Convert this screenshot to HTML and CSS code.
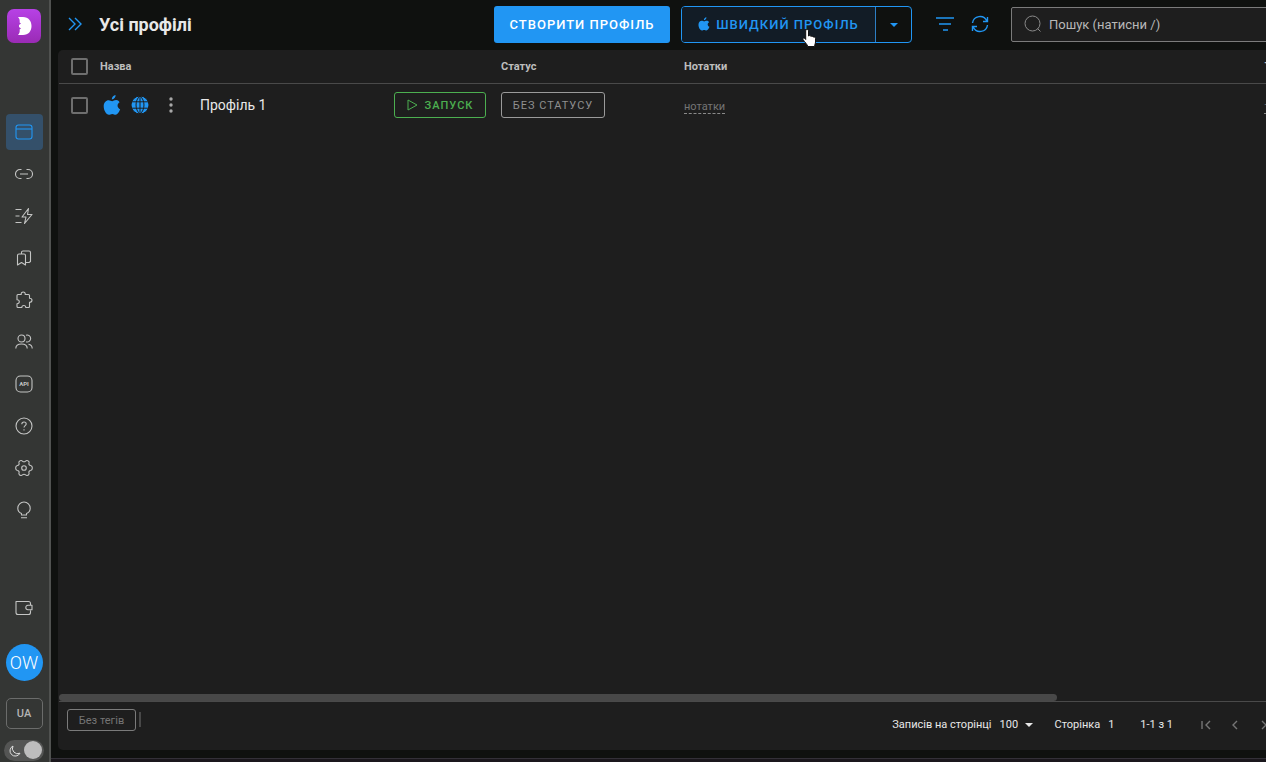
FILE: index.html
```html
<!DOCTYPE html>
<html lang="uk">
<head>
  <meta charset="UTF-8">
  <meta name="viewport" content="width=device-width, initial-scale=1.0">
  <title>Усі профілі</title>
  <link rel="stylesheet" href="styles.css">
</head>
<body>

<svg class="sprite" aria-hidden="true">
  <symbol id="apple" viewBox="0 0 18 20">
    <path d="M12.600 0c.1 2.400-1.600 4.400-3.800 4.500C8.600 2.300 10.500.3 12.600 0zM16.600 7.200c-3 1.700-2.500 5.700.6 7-.8 2.200-2.600 5.500-4.600 5.500-1.300 0-1.700-.8-3.300-.8s-2.200.8-3.400.8C3.300 19.700.7 15.600.7 11.300.7 7.500 3.100 5.200 5.600 5.200c1.500 0 2.700 1 3.600 1s2.200-1.100 4-1.100c1.300 0 2.500.7 3.400 2.100z"/>
  </symbol>
</svg>

<div class="app">

  <aside class="sidebar">
    <a href="#" class="logo" aria-label="Головна">
      <svg width="34" height="34" viewBox="0 0 34 34">
        <defs>
          <linearGradient id="logo_bg" x1="0" y1="0" x2="0" y2="1">
            <stop offset="0" stop-color="#b741e6"/>
            <stop offset="1" stop-color="#9a2bb5"/>
          </linearGradient>
        </defs>
        <rect width="34" height="34" rx="7" fill="url(#logo_bg)"/>
        <path d="M11 8h5c5.500 0 8.500 4 8.500 9s-3 9-8.500 9h-5c1.500-1.500 2-3.500 1.600-5.500l1.400-1-2-1.500v-2l2-1.500-1.400-1C13 11.500 12.500 9.500 11 8z" fill="#fff"/>
      </svg>
    </a>

    <nav class="menu">
      <a href="#" class="menu_item active" aria-label="Профілі">
        <svg viewBox="0 0 18 18"><rect x="1" y="2" width="16" height="14" rx="2.500"/><path d="M1 6h16"/></svg>
      </a>
      <a href="#" class="menu_item" aria-label="Проксі">
        <svg viewBox="0 0 18 18"><path d="M6.500 4.500H5a4.500 4.500 0 0 0 0 9h1.500M11.500 4.500H13a4.500 4.500 0 0 1 0 9h-1.500M5 9h8"/></svg>
      </a>
      <a href="#" class="menu_item" aria-label="Автоматизація">
        <svg viewBox="0 0 18 18"><path d="M.5 2.500h6M.5 9h4M.5 15.500h6M13.500 1.500l-6.500 8.500h4l-1.500 6.500 7.500-9h-4.500z"/></svg>
      </a>
      <a href="#" class="menu_item" aria-label="Закладки">
        <svg viewBox="0 0 18 18"><path d="M2.500 6.500c0-.8.700-1.500 1.500-1.500h5c.8 0 1.500.7 1.500 1.500v9.500l-4-2.500-4 2.500zM6.500 5V3.500c0-.8.700-1.500 1.500-1.500h6c.8 0 1.500.7 1.500 1.500v9l-1.500 1h-3.500"/></svg>
      </a>
      <a href="#" class="menu_item" aria-label="Розширення">
        <svg viewBox="0 0 18 18"><path d="M3 3.500h3.200c-.2-1.600.7-2.500 2-2.500s2.200.9 2 2.500h3.300c.6 0 1 .4 1 1v2.700c1.500 0 2.500.8 2.500 2s-1 2-2.500 2v4.300c0 .6-.4 1-1 1h-2.700c0-1.300-.8-2-2-2s-2 .7-2 2H3c-.6 0-1-.4-1-1v-2.800c1.500 0 2.300-.7 2.300-1.900s-.8-2-2.300-2V4.500c0-.6.400-1 1-1z"/></svg>
      </a>
      <a href="#" class="menu_item" aria-label="Команда">
        <svg viewBox="0 0 18 18"><circle cx="6.500" cy="5.500" r="3.500"/><path d="M.8 15.500c0-3 2-4.500 5.700-4.500s5.700 1.500 5.700 4.500M11 2.200a3.500 3.500 0 1 1 0 6.600M13.500 11.200c2.500.5 3.700 2 3.700 4.300"/></svg>
      </a>
      <a href="#" class="menu_item" aria-label="API">
        <svg viewBox="0 0 18 18"><rect x="1" y="1" width="16" height="16" rx="4.500"/><text x="9" y="11" text-anchor="middle" class="api_text">API</text></svg>
      </a>
      <a href="#" class="menu_item" aria-label="Довідка">
        <svg viewBox="0 0 18 18"><circle cx="9" cy="9" r="8"/><path d="M6.800 7.200C6.800 5.800 7.700 5 9 5s2.200.8 2.200 2c0 1.600-2.200 1.700-2.200 3.500M9 12.200v1.200"/></svg>
      </a>
      <a href="#" class="menu_item" aria-label="Налаштування">
        <svg viewBox="0 0 18 18"><circle cx="9" cy="9" r="2.300"/><path d="M6 1.500c1.200-.3 1.500 1.300 3 1.300s1.800-1.600 3-1.300c1.500.4 2.400 1.300 2 2.500-.5 1.300.2 2.300 1.700 2.500 2.200.5 2.200 4.500 0 5-1.500.2-2.200 1.200-1.700 2.500.4 1.200-.5 2.100-2 2.500-1.200.3-1.500-1.300-3-1.300s-1.800 1.600-3 1.300c-1.500-.4-2.400-1.300-2-2.500.5-1.300-.2-2.300-1.700-2.500-2.200-.5-2.200-4.500 0-5C3.800 6.300 4.500 5.300 4 4c-.4-1.200.5-2.100 2-2.500z"/></svg>
      </a>
      <a href="#" class="menu_item" aria-label="Ідеї">
        <svg viewBox="0 0 18 18"><path d="M6.500 14v-1.500C4 11.500 2.800 9.500 2.800 7.200a6.200 6.200 0 0 1 12.400 0c0 2.300-1.200 4.300-3.700 5.300V14zM6 16.800h6"/></svg>
      </a>
    </nav>

    <div class="sidebar_bottom">
      <a href="#" class="menu_item" aria-label="Гаманець">
        <svg viewBox="0 0 18 18"><path d="M15.500 6V4.500c0-1.200-.8-2-2-2H1v11c0 1.200.8 2 2 2h10.500c1.200 0 2-.8 2-2V11.500M13 6.300h4v4.400h-4a2.200 2.200 0 0 1 0-4.400z"/></svg>
      </a>
      <button type="button" class="avatar">OW</button>
      <button type="button" class="lang">UA</button>
      <label class="theme">
        <input type="checkbox" checked aria-label="Темна тема">
        <svg width="12" height="12" viewBox="0 0 12 12"><path d="M4 1a5.300 5.300 0 1 0 7 7.200A5.300 5.300 0 0 1 4 1z"/></svg>
      </label>
    </div>
  </aside>

  <main class="main">
    <header class="topbar">
      <button type="button" class="icon_btn expand" aria-label="Розгорнути">
        <svg width="14" height="14" viewBox="0 0 14 14"><path d="M1 1l6 6-6 6M7 1l6 6-6 6"/></svg>
      </button>
      <h1>Усі профілі</h1>
      <button type="button" class="btn btn_create">Створити профіль</button>
      <div class="btn_group">
        <button type="button" class="btn btn_quick">
          <svg class="apple" width="12" height="14"><use href="#apple"/></svg>
          Швидкий профіль
        </button>
        <button type="button" class="btn btn_more" aria-label="Ще">
          <svg width="8" height="4" viewBox="0 0 8 4"><path d="M0 0h8L4 4z"/></svg>
        </button>
        <svg class="pointer" width="16" height="20" viewBox="0 0 16 20"><path d="M5 1.500c1 0 1.500.7 1.500 1.500v5c.5-.6 2-.6 2.400.4.600-.5 2-.3 2.300.7.700-.4 2.300 0 2.300 1.400V14c0 1.500-.8 2.500-1 4.500H5.800C5.500 16.500 2.500 14 1 11.500c-.6-1.200 1-1.900 1.900-1l.8 1V3c0-.8.400-1.500 1.300-1.500z"/></svg>
      </div>
      <button type="button" class="icon_btn filter" aria-label="Фільтр">
        <svg width="18" height="14" viewBox="0 0 18 14"><path d="M0 1h18M3 7h12M7 13h5"/></svg>
      </button>
      <button type="button" class="icon_btn refresh" aria-label="Оновити">
        <svg width="18" height="18" viewBox="0 0 18 18"><path d="M1.500 8A7.500 7.500 0 0 1 15.800 6M16.500 10A7.500 7.500 0 0 1 2.200 12M16.500 2v4.500H12M1.500 16v-4.500H6"/></svg>
      </button>
      <label class="search">
        <svg width="18" height="18" viewBox="0 0 18 18"><circle cx="8.500" cy="8.500" r="7.500"/><path d="M13.500 13.500l3 3"/></svg>
        <input type="search" placeholder="Пошук (натисни /)" aria-label="Пошук">
      </label>
    </header>

    <section class="card">
      <div class="table_box">
        <table>
          <thead>
            <tr>
              <th class="col_name">
                <div class="cell">
                  <input type="checkbox" aria-label="Вибрати всі">
                  <span>Назва</span>
                </div>
              </th>
              <th class="col_status">Статус</th>
              <th>Нотатки</th>
              <th class="col_tags">Теги</th>
            </tr>
          </thead>
          <tbody>
            <tr>
              <td class="col_name">
                <div class="cell">
                  <input type="checkbox" aria-label="Вибрати Профіль 1">
                  <svg class="apple os_icon" width="18" height="20"><use href="#apple"/></svg>
                  <svg class="globe" width="18" height="18" viewBox="0 0 18 18"><circle cx="9" cy="9" r="9"/><path d="M0 5.800h18M0 12.200h18M9 0v18M9 0C3.700 4 3.700 14 9 18M9 0c5.300 4 5.300 14 0 18"/></svg>
                  <button type="button" class="icon_btn dots" aria-label="Меню профілю">
                    <svg width="4" height="16" viewBox="0 0 4 16"><circle cx="2" cy="2" r="1.700"/><circle cx="2" cy="8" r="1.700"/><circle cx="2" cy="14" r="1.700"/></svg>
                  </button>
                  <span class="profile_name">Профіль 1</span>
                  <button type="button" class="small_btn run">
                    <svg width="11" height="12" viewBox="0 0 11 12"><path d="M1 1l9 5-9 5z"/></svg>
                    Запуск
                  </button>
                </div>
              </td>
              <td><button type="button" class="small_btn">Без статусу</button></td>
              <td><a href="#" class="hint">нотатки</a></td>
              <td><a href="#" class="hint">теги</a></td>
            </tr>
          </tbody>
        </table>
        <div class="scrollbar"></div>
      </div>

      <footer class="card_footer">
        <div class="tags">
          <button type="button" class="tag_btn">Без тегів</button>
          <span class="divider"></span>
        </div>
        <div class="pagination">
          <label for="per_page">Записів на сторінці</label>
          <div class="select_box">
            <select id="per_page"><option>100</option></select>
            <svg width="8" height="4" viewBox="0 0 8 4"><path d="M0 0h8L4 4z"/></svg>
          </div>
          <span class="page">Сторінка</span>
          <span class="page_num">1</span>
          <span class="range">1-1 з 1</span>
          <button type="button" class="icon_btn pager" aria-label="Перша сторінка">
            <svg width="10" height="10" viewBox="0 0 10 10"><path d="M1 1v8M9 1L5 5l4 4"/></svg>
          </button>
          <button type="button" class="icon_btn pager" aria-label="Попередня сторінка">
            <svg width="10" height="10" viewBox="0 0 10 10"><path d="M7 1L3 5l4 4"/></svg>
          </button>
          <button type="button" class="icon_btn pager" aria-label="Наступна сторінка">
            <svg width="10" height="10" viewBox="0 0 10 10"><path d="M3 1l4 4-4 4"/></svg>
          </button>
        </div>
      </footer>
    </section>

    <div class="bottom_line"></div>
  </main>

</div>

</body>
</html>
```
FILE: styles.css
```css
*{
  padding: 0;
  margin: 0;
  box-sizing: border-box;
}

body{
  font-family: Roboto, sans-serif;
  font-size: 14px;
  color: #e8e8e8;
  background: #0f110f;
  overflow: hidden;
}

button, input, select{
  font-family: inherit;
  color: inherit;
  background: none;
  border: none;
  outline: none;
}

button{
  cursor: pointer;
}

svg{
  flex: none;
  fill: none;
}

.sprite{
  position: absolute;
  width: 0;
  height: 0;
}

.app{
  display: flex;
  height: 100vh;
}

/* Sidebar */
.sidebar{
  width: 51px;
  flex: none;
  display: flex;
  flex-direction: column;
  align-items: center;
  padding: 9px 1px 1px 0;
  background: #343634;
  border-right: 2px solid #505250;
}

.logo{
  height: 34px;
}

.menu{
  display: flex;
  flex-direction: column;
  gap: 6px;
  margin-top: 71px;
}

.menu_item{
  width: 37px;
  height: 36px;
  display: flex;
  align-items: center;
  justify-content: center;
  border-radius: 4px;
}

.menu_item svg{
  width: 18px;
  height: 18px;
  stroke: #c4c5c4;
  stroke-width: 1.1;
  stroke-linejoin: round;
}

.menu_item.active{
  background: #34506a;
}

.menu_item.active svg{
  stroke: #2196f3;
}

.api_text{
  font-size: 6px;
  font-weight: 700;
  fill: #c4c5c4;
  stroke: none;
}

.sidebar_bottom{
  display: flex;
  flex-direction: column;
  align-items: center;
  margin-top: auto;
}

.avatar{
  width: 37px;
  height: 37px;
  margin: 18px 0 17px;
  border-radius: 50%;
  background: #2196f3;
  color: #fff;
  font-size: 18px;
  font-weight: 300;
}

.lang{
  width: 37px;
  height: 31px;
  border: 1px solid #6b6c6b;
  border-radius: 5px;
  color: #b4b4b4;
  font-size: 11px;
  font-weight: 500;
}

.theme{
  position: relative;
  display: flex;
  margin-top: 11px;
}

.theme input{
  appearance: none;
  width: 40px;
  height: 21px;
  border-radius: 11px;
  background: #545554;
}

.theme input::after{
  content: "";
  display: block;
  width: 18px;
  height: 18px;
  margin: 1px 2px 0 auto;
  border-radius: 50%;
  background: #bdbdbd;
}

.theme svg{
  position: absolute;
  left: 5px;
  top: 5px;
  stroke: #e0e0e0;
}

/* Main area, runs past the right edge of the window */
.main{
  flex: 1;
  min-width: 0;
  display: flex;
  flex-direction: column;
  margin-right: -10px;
}

.topbar{
  height: 50px;
  flex: none;
  display: flex;
  align-items: center;
  padding: 0 0 2px 17px;
}

h1{
  flex: 1;
  margin-left: 17px;
  font-size: 18px;
  font-weight: 700;
}

.icon_btn{
  display: flex;
  align-items: center;
  justify-content: center;
  stroke: #2196f3;
}

.expand svg, .refresh svg{
  stroke-width: 1.4;
}

.filter svg{
  stroke-width: 1.5;
}

.btn{
  height: 37px;
  font-size: 13px;
  font-weight: 500;
  letter-spacing: 1px;
  text-transform: uppercase;
}

.btn_create{
  width: 176px;
  background: #2196f3;
  color: #fff;
  border-radius: 3px;
}

.btn_group{
  position: relative;
  display: flex;
  margin-left: 11px;
  border: 1px solid #2196f3;
  border-radius: 4px;
  color: #2196f3;
}

.btn_group .btn{
  height: 35px;
}

.btn_quick{
  width: 193px;
  display: flex;
  align-items: center;
  justify-content: center;
  gap: 6px;
  background: #121c26;
  border-radius: 3px 0 0 3px;
}

.apple, .btn_more svg{
  fill: #2196f3;
}

.btn_more{
  width: 36px;
  border-left: 1px solid #2d7fc4;
}

.btn_more svg{
  vertical-align: middle;
}

.pointer{
  position: absolute;
  left: 120px;
  top: 21px;
  fill: #fff;
  stroke: #111;
}

.filter{
  margin-left: 24px;
}

.refresh{
  margin-left: 17px;
}

.search{
  width: 265px;
  height: 35px;
  display: flex;
  align-items: center;
  gap: 7px;
  margin-left: 22px;
  padding-left: 12px;
  background: #1e1e1e;
  border: 1px solid #7b7b7b;
  border-radius: 2px;
}

.search svg{
  stroke: #8a8a8a;
}

.search input{
  flex: 1;
  font-size: 13px;
}

.search input::placeholder{
  color: #b8b8b8;
}

/* Profiles table */
.card{
  flex: 1;
  min-height: 0;
  display: flex;
  flex-direction: column;
  margin-left: 7px;
  padding-left: 1px;
  background: #1e1e1e;
  border-radius: 5px;
  overflow: hidden;
}

.table_box{
  flex: 1;
  min-height: 0;
  display: flex;
  flex-direction: column;
  overflow: hidden;
}

table{
  width: 120%;
  table-layout: fixed;
  border-collapse: collapse;
}

th{
  height: 33px;
  padding-left: 15px;
  border-bottom: 1px solid #4a4a4a;
  color: #bdbdbd;
  font-size: 11px;
  font-weight: 700;
  text-align: left;
}

td{
  height: 44px;
  padding-left: 15px;
}

.col_name{
  width: 427px;
  padding-left: 12px;
}

.col_status{
  width: 183px;
}

.col_tags{
  width: 270px;
}

.cell{
  display: flex;
  align-items: center;
}

.cell input{
  appearance: none;
  width: 17px;
  height: 17px;
  border: 2px solid #6e6e6e;
  border-radius: 2px;
}

th .cell span{
  margin-left: 12px;
}

.os_icon{
  margin-left: 15px;
}

.globe{
  margin-left: 10px;
  fill: #2196f3;
  stroke: #1e1e1e;
}

.dots{
  margin-left: 20px;
  stroke: none;
}

.dots svg{
  fill: #a8a8a8;
}

.profile_name{
  flex: 1;
  margin-left: 27px;
  font-size: 14px;
}

.small_btn{
  display: inline-flex;
  align-items: center;
  justify-content: center;
  gap: 7px;
  width: 104px;
  height: 26px;
  border: 1px solid #9a9a9a;
  border-radius: 3px;
  color: #8f8f8f;
  font-size: 11px;
  letter-spacing: 1px;
  text-transform: uppercase;
  vertical-align: middle;
}

.run{
  width: 92px;
  border-color: #4caf50;
  color: #4caf50;
  font-weight: 500;
}

.run svg{
  stroke: #4caf50;
}

.hint{
  color: #757575;
  font-size: 11px;
  text-decoration: none;
  border-bottom: 1px dashed #8a8a8a;
}

.scrollbar{
  width: 82%;
  height: 7px;
  margin-top: auto;
  border-radius: 4px;
  background: #484848;
}

/* Footer */
.card_footer{
  height: 49px;
  flex: none;
  display: flex;
  justify-content: space-between;
  border-top: 1px solid #4a4a4a;
}

.tags{
  display: flex;
  align-items: flex-start;
  gap: 3px;
  padding: 7px 0 0 8px;
}

.tag_btn{
  width: 69px;
  height: 22px;
  border: 1px solid #7b7b7b;
  border-radius: 3px;
  color: #757575;
  font-size: 11px;
}

.divider{
  width: 2px;
  height: 15px;
  margin-top: 3px;
  background: #484848;
}

.pagination{
  display: flex;
  align-items: center;
  margin-right: -2px;
  padding-bottom: 3px;
  font-size: 11px;
}

.select_box{
  display: flex;
  align-items: center;
  margin-left: 8px;
}

.select_box select{
  appearance: none;
  width: 25px;
  font-size: 11px;
}

.select_box svg{
  fill: #e8e8e8;
}

.page{
  margin-left: 22px;
}

.page_num{
  margin-left: 8px;
}

.range{
  margin: 0 18px 0 26px;
}

.pager{
  width: 29px;
  stroke: #757575;
  stroke-width: 1.4;
}

.bottom_line{
  height: 4px;
  flex: none;
  margin-top: 8px;
  background: #1a171c;
  border-top: 1px solid #333038;
}
```
